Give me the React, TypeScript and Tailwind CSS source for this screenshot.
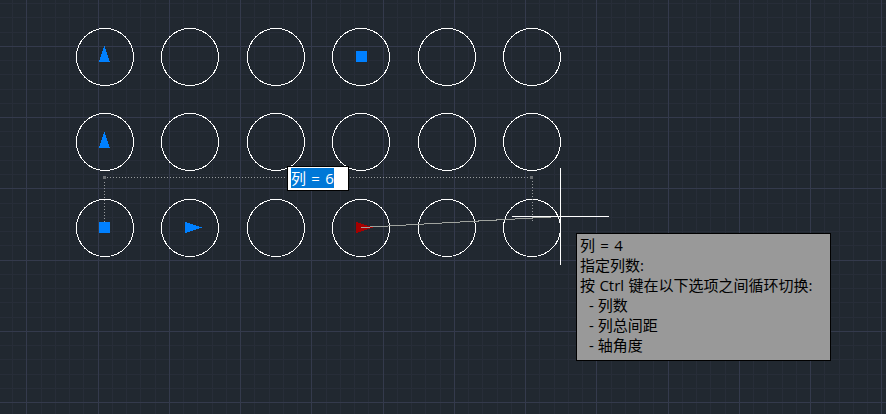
const WIDTH = 886;
const HEIGHT = 414;
const STEP = 14.25;

const columns = [105, 190, 276, 361, 447, 532];
const rows = [57, 142, 228];

type GridLine = { at: number; major: boolean };

function gridLines(origin: number, limit: number): GridLine[] {
  const lines: GridLine[] = [];
  for (let k = -5; k < 65; k++) {
    const at = Math.floor(origin + k * STEP);
    if (at >= 0 && at < limit) lines.push({ at, major: k % 5 === 0 });
  }
  return lines;
}

function Grid() {
  const paint = (line: GridLine) => (line.major ? "fill-[#343a4c]" : "fill-[#272d38]");
  const xs = gridLines(26.9, WIDTH);
  const ys = gridLines(46.25, HEIGHT);
  return (
    <g>
      {[false, true].map((major) => (
        <g key={String(major)}>
          {xs.filter((l) => l.major === major).map((l) => (
            <rect key={`x${l.at}`} x={l.at} y={0} width={1} height={HEIGHT} className={paint(l)} />
          ))}
          {ys.filter((l) => l.major === major).map((l) => (
            <rect key={`y${l.at}`} x={0} y={l.at} width={WIDTH} height={1} className={paint(l)} />
          ))}
        </g>
      ))}
    </g>
  );
}

function Drawing() {
  return (
    <svg width={WIDTH} height={HEIGHT} shapeRendering="crispEdges" className="block">
      <Grid />
      <g className="fill-none stroke-white">
        {rows.map((cy) =>
          columns.map((cx) => <circle key={`${cx}-${cy}`} cx={cx} cy={cy} r={28.5} />),
        )}
      </g>

      <g className="fill-none stroke-[#989b9e]" strokeDasharray="1 2">
        <path d="M107 177.5H530" />
        <path d="M104.5 182V222" />
        <path d="M532.5 181V222" />
      </g>
      <g className="fill-[#6b6e72]">
        <rect x={103} y={176} width={3} height={3} />
        <rect x={530} y={176} width={3} height={3} />
      </g>

      <g className="fill-[#0080ff]">
        <path d="M104.5 45.5L110 62H99Z" />
        <path d="M104.5 131.5L110 148H99Z" />
        <rect x={99} y={222} width={11} height={11} />
        <rect x={356} y={51} width={11} height={11} />
        <path d="M185 222L201.5 227.5L185 233Z" />
      </g>
      <path d="M356 222L372.5 227.5L356 233Z" className="fill-[#a50000]" />
      <path d="M361 227.5L551 217" className="fill-none stroke-[#a0a49f]" />

      <g className="fill-white">
        <rect x={560} y={168} width={1} height={97} />
        <rect x={512} y={216} width={97} height={1} />
      </g>
    </svg>
  );
}

function ValueInput() {
  return (
    <div className="absolute left-[287px] top-[166px] flex h-[25px] w-[62px] border border-black bg-white pl-[3px] pt-px">
      <span className="h-5 w-[43px] whitespace-pre bg-[#0078d7] text-[15px] leading-5 text-white [word-spacing:1.4px]">
        列 = 6
      </span>
    </div>
  );
}

function PromptTooltip() {
  const options = ["列数", "列总间距", "轴角度"];
  return (
    <div className="absolute left-[576px] top-[233px] h-[128px] w-[255px] whitespace-pre border border-black bg-[#999999] pl-[3px] pt-px text-[15px] leading-5 text-black">
      <p className="[word-spacing:1.4px]">列 = 4</p>
      <p>指定列数:</p>
      <p className="[word-spacing:0.5px]">按 Ctrl 键在以下选项之间循环切换:</p>
      <ul className="pl-[9px]">
        {options.map((option) => (
          <li key={option}>- {option}</li>
        ))}
      </ul>
    </div>
  );
}

export default function App() {
  return (
    <main className="relative h-[414px] w-[886px] overflow-hidden bg-[#212830] font-['Open_Sans','Noto_Sans_CJK_SC',sans-serif]">
      <Drawing />
      <ValueInput />
      <PromptTooltip />
    </main>
  );
}
